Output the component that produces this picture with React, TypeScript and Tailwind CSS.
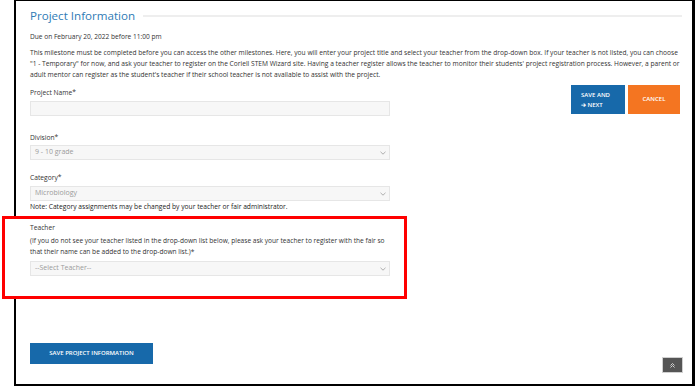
import React from "react";

const font = { fontFamily: '"Open Sans", "Noto Sans", Arial, sans-serif' };

function Chevron() {
  return (
    <svg width="6" height="4" viewBox="0 0 6 4" className="shrink-0">
      <path d="M0.5 0.8 L3 3.2 L5.5 0.8" fill="none" stroke="#9a9a9a" strokeWidth="0.8" />
    </svg>
  );
}

function Select({ value }: { value: string }) {
  return (
    <div className="flex h-[15px] w-[360px] items-center justify-between border border-[#e6e6e6] bg-[#f7f7f7] pl-[4px] pr-[3px] text-[7px] text-[#9b9b9b]">
      <span>{value}</span>
      <Chevron />
    </div>
  );
}

export default function App() {
  return (
    <div className="relative h-[387px] w-[696px] overflow-hidden bg-white text-[#333]" style={font}>
      <div className="ml-[14px] h-[386px] w-[681px] border-b-2 border-l-2 border-r-[3px] border-t border-black pl-[14px] pr-[10px]">
        <div className="flex items-center gap-[8px] pt-[5px]">
          <h1 className="text-[11.6px] leading-[20px] text-[#2f7bb5]">Project Information</h1>
          <div className="h-[2px] flex-1 bg-[#eeeeee]" />
        </div>
        <p className="mt-[5px] text-[6.6px] leading-[11px]">Due on February 20, 2022 before 11:00 pm</p>
        <p className="mt-[5px] whitespace-nowrap text-[6.65px] leading-[11px]">
          This milestone must be completed before you can access the other milestones. Here, you will enter your project title and select your teacher from the drop-down box. If your teacher is not listed, you can choose
          <br />
          "1 - Temporary" for now, and ask your teacher to register on the Coriell STEM Wizard site. Having a teacher register allows the teacher to monitor their students' project registration process. However, a parent or
          <br />
          adult mentor can register as the student's teacher if their school teacher is not available to assist with the project.
        </p>
        <div className="mt-[5px] flex justify-between">
          <div className="w-[360px] pt-[2px]">
            <div className="text-[6.7px] leading-[11px]">Project Name*</div>
            <div className="mt-[3px] h-[15px] w-[360px] border border-[#e6e6e6] bg-[#f7f7f7]" />
            <div className="mt-[16px] text-[6.7px] leading-[11px]">Division*</div>
            <div className="mt-[2px]">
              <Select value="9 - 10 grade" />
            </div>
            <div className="mt-[12px] text-[6.7px] leading-[11px]">Category*</div>
            <div className="mt-[3px]">
              <Select value="Microbiology" />
            </div>
            <div className="text-[6.7px] font-medium leading-[12px] text-[#1a1a1a]">
              Note: Category assignments may be changed by your teacher or fair administrator.
            </div>
            <div className="relative z-10 mt-[9px]">
              <div className="text-[6.7px] leading-[11px]">Teacher</div>
              <p className="mt-[2px] w-[362px] text-[6.6px] leading-[11px]">
                (If you do not see your teacher listed in the drop-down list below, please ask your teacher to register with the fair so that their name can be added to the drop-down list.)*
              </p>
              <div className="mt-[4px]">
                <Select value="--Select Teacher--" />
              </div>
            </div>
            <button className="mt-[67px] flex h-[21px] w-[123px] items-center justify-center bg-[#1769aa] text-[6px] font-semibold text-white">
              SAVE PROJECT INFORMATION
            </button>
          </div>
          <div className="flex gap-[3px] pr-[2px]">
            <button className="flex h-[29px] w-[54px] flex-col items-start justify-center bg-[#1769aa] pl-[10px] text-left text-[6px] font-semibold leading-[10px] text-white">
              <span>SAVE AND</span>
              <span>➔ NEXT</span>
            </button>
            <button className="flex h-[29px] w-[52px] items-center justify-center bg-[#f47521] text-[6px] font-semibold text-white">
              CANCEL
            </button>
          </div>
        </div>
      </div>
      <div className="absolute left-[2px] top-[216px] h-[83px] w-[405px] border-[3px] border-[#ff0000] bg-white" />
      <div className="absolute left-[662px] top-[357px] flex h-[16px] w-[21px] items-center justify-center border border-[#d0d0d0] bg-[#555555]">
        <svg width="5" height="5" viewBox="0 0 5 5">
          <path d="M0.5 2.5 L2.5 0.5 L4.5 2.5 M0.5 4.5 L2.5 2.5 L4.5 4.5" fill="none" stroke="#e0e0e0" strokeWidth="0.9" />
        </svg>
      </div>
    </div>
  );
}
